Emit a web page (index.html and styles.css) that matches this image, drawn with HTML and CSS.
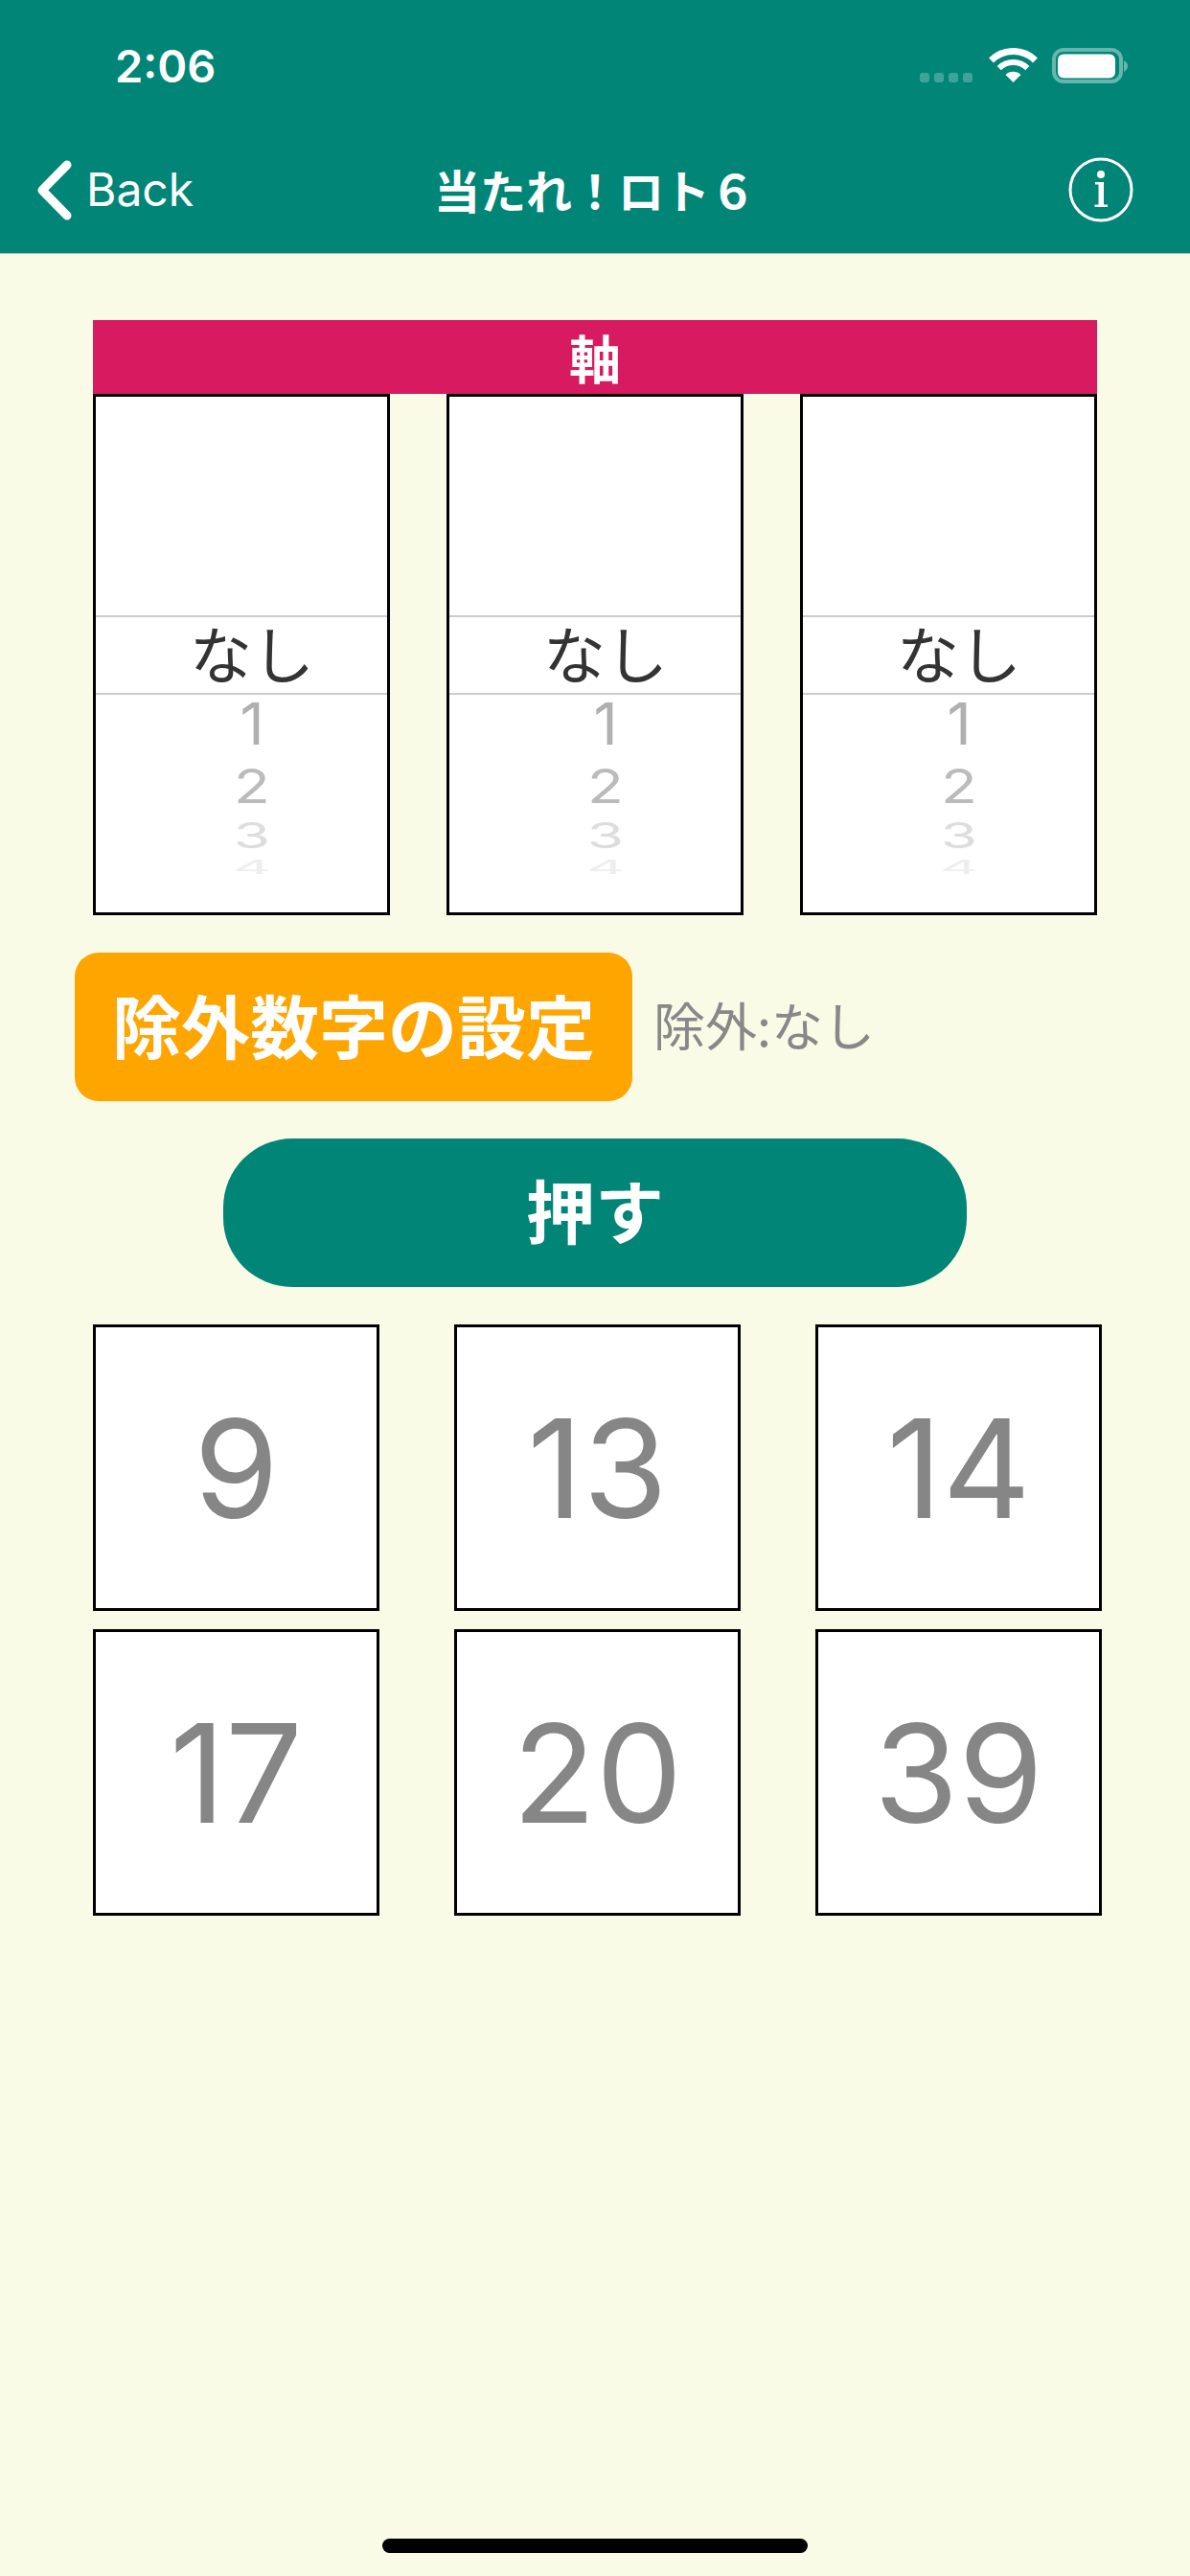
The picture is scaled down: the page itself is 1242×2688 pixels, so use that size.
FILE: index.html
```html
<!DOCTYPE html>
<html lang="ja">
  <head>
    <meta charset="UTF-8" />
    <meta name="viewport" content="width=device-width, initial-scale=1.0" />
    <title>当たれ！ロト６</title>
    <link rel="stylesheet" href="styles.css">
  </head>
  <body>
    <div class="page">
      <header class="header">
        <div class="status">
          <span class="time">2:06</span>
          <svg class="status-icons" width="217" height="37" viewBox="0 0 217 37">
            <g fill="#fff" fill-opacity="0.25">
              <rect x="0" y="26" width="10" height="10" rx="3" />
              <rect x="15" y="26" width="10" height="10" rx="3" />
              <rect x="30" y="26" width="10" height="10" rx="3" />
              <rect x="45" y="26" width="10" height="10" rx="3" />
            </g>
            <g fill="none" stroke="#fff">
              <path d="M74.5 13 A32.5 32.5 0 0 1 120.5 13" stroke-width="7" />
              <path d="M82.7 21.2 A21 21 0 0 1 112.3 21.2" stroke-width="6" />
            </g>
            <path d="M97.5 36 L89.5 28 A11.5 11.5 0 0 1 105.5 28 Z" fill="#fff" />
            <rect x="140" y="2" width="70" height="33" rx="10" fill="none" stroke="#fff" stroke-opacity="0.4" stroke-width="4" />
            <rect x="144" y="6.500" width="60" height="25" rx="6" fill="#fff" />
            <path d="M213 13 C216 15 217 17 217 19 C217 21 216 23 213 25 Z" fill="#fff" fill-opacity="0.4" />
          </svg>
        </div>
        <nav class="nav">
          <div class="nav-left">
            <svg class="chevron" width="37" height="63" viewBox="0 0 37 63">
              <path d="M32 5 L6 31.500 L32 58" fill="none" stroke="#fff" stroke-width="9" stroke-linecap="round" stroke-linejoin="round" />
            </svg>
            <span class="back">Back</span>
          </div>
          <div class="title">当たれ！ロト６</div>
          <div class="nav-right">
            <svg width="68" height="68" viewBox="0 0 68 68">
              <circle cx="34" cy="34" r="32" fill="none" stroke="#fff" stroke-width="3" />
              <circle cx="34" cy="18" r="4" fill="#fff" />
              <path d="M28 26 H37 V49.500 H41 V52 H27.500 V49.500 H31.500 V28.500 H28 Z" fill="#fff" />
            </svg>
          </div>
        </nav>
      </header>

      <main class="main">
        <div class="axis-bar">軸</div>
        <div class="pickers">
          <div class="picker">
            <div class="wheel-blank"></div>
            <div class="wheel-selected"><span>なし</span></div>
            <div class="wheel-rest">
              <div class="wheel-num n1"><span>1</span></div>
              <div class="wheel-num n2"><span>2</span></div>
              <div class="wheel-num n3"><span>3</span></div>
              <div class="wheel-num n4"><span>4</span></div>
            </div>
          </div>
          <div class="picker">
            <div class="wheel-blank"></div>
            <div class="wheel-selected"><span>なし</span></div>
            <div class="wheel-rest">
              <div class="wheel-num n1"><span>1</span></div>
              <div class="wheel-num n2"><span>2</span></div>
              <div class="wheel-num n3"><span>3</span></div>
              <div class="wheel-num n4"><span>4</span></div>
            </div>
          </div>
          <div class="picker">
            <div class="wheel-blank"></div>
            <div class="wheel-selected"><span>なし</span></div>
            <div class="wheel-rest">
              <div class="wheel-num n1"><span>1</span></div>
              <div class="wheel-num n2"><span>2</span></div>
              <div class="wheel-num n3"><span>3</span></div>
              <div class="wheel-num n4"><span>4</span></div>
            </div>
          </div>
        </div>

        <div class="exclude-row">
          <div class="exclude-btn">除外数字の設定</div>
          <div class="exclude-label">除外:なし</div>
        </div>

        <div class="push-btn">押す</div>

        <div class="results">
          <div class="result">9</div>
          <div class="result">13</div>
          <div class="result">14</div>
          <div class="result">17</div>
          <div class="result">20</div>
          <div class="result">39</div>
        </div>
      </main>

      <div class="home-bar"></div>
    </div>
  </body>
</html>
```

FILE: styles.css
```css
* {
  box-sizing: border-box;
}
body {
  margin: 0;
  background-color: #f9fbe7;
  font-family: "Noto Sans CJK JP", sans-serif;
}
.page {
  height: 2688px;
  display: flex;
  flex-direction: column;
  overflow: hidden;
}

/* header */
.header {
  height: 265px;
  background-color: #008577;
  border-bottom: 1px solid #b4bdb0;
  color: #fff;
}
.status {
  height: 132px;
  padding: 4px 65px 0 120px;
  display: flex;
  align-items: center;
  justify-content: space-between;
}
.time {
  font-family: Inter, sans-serif;
  font-size: 47px;
  font-weight: 600;
  line-height: 1;
}
.nav {
  height: 132px;
  padding: 0 38px;
  display: grid;
  grid-template-columns: 1fr auto 1fr;
  align-items: center;
}
.nav-left {
  display: flex;
  align-items: center;
  gap: 15px;
}
.back {
  font-family: Inter, sans-serif;
  font-size: 48px;
  line-height: 1;
}
.title {
  padding-bottom: 3px;
  font-size: 48px;
  font-weight: 700;
  line-height: 1;
}
.nav-right {
  display: flex;
  justify-content: flex-end;
  padding-right: 21px;
}

/* main */
.main {
  padding: 69px 0 0 97px;
}
.axis-bar {
  width: 1048px;
  height: 77px;
  background-color: #d81b60;
  color: #fff;
  font-size: 54px;
  font-weight: 700;
  line-height: 77px;
  text-align: center;
}
.pickers {
  width: 1048px;
  display: flex;
  justify-content: space-between;
}
.picker {
  width: 310px;
  height: 544px;
  background-color: #fff;
  border: 3px solid #000;
}
.wheel-blank {
  height: 228px;
}
.wheel-selected {
  height: 83px;
  border-top: 2px solid #ccc;
  border-bottom: 2px solid #ccc;
  padding-left: 22px;
  color: #333;
  font-size: 65px;
  line-height: 72px;
  text-align: center;
}
.wheel-rest {
  padding-left: 22px;
}
.wheel-num {
  font-family: Inter, sans-serif;
  font-size: 62px;
  line-height: 1;
  display: flex;
  align-items: center;
  justify-content: center;
}
.wheel-num span {
  display: block;
}
.n1 {
  height: 60px;
  color: #b0b0b0;
}
.n1 span {
  transform: scaleY(0.98);
}
.n2 {
  height: 70px;
  color: #bbb;
}
.n2 span {
  transform: scaleY(0.8);
}
.n3 {
  height: 33px;
  color: #ddd;
}
.n3 span {
  transform: scaleY(0.6);
}
.n4 {
  height: 34px;
  color: #eee;
}
.n4 span {
  transform: scaleY(0.32);
}

.exclude-row {
  margin: 39px 0 0 -19px;
  display: flex;
  align-items: center;
  gap: 22px;
}
.exclude-btn {
  width: 582px;
  height: 155px;
  background-color: #ffa500;
  border-radius: 25px;
  color: #fff;
  font-size: 72px;
  font-weight: 700;
  line-height: 147px;
  text-align: center;
}
.exclude-label {
  padding-bottom: 6px;
  color: #888;
  font-size: 54px;
  line-height: 1;
}
.push-btn {
  width: 776px;
  height: 155px;
  margin: 39px 0 0 136px;
  background-color: #008577;
  border-radius: 72px;
  color: #fff;
  font-size: 72px;
  font-weight: 700;
  line-height: 145px;
  text-align: center;
}

.results {
  margin-top: 39px;
  display: grid;
  grid-template-columns: repeat(3, 299px);
  grid-auto-rows: 299px;
  column-gap: 78px;
  row-gap: 19px;
}
.result {
  background-color: #fff;
  border: 3px solid #000;
  color: #868686;
  font-family: Inter, sans-serif;
  font-size: 143px;
  display: flex;
  align-items: center;
  justify-content: center;
}

.home-bar {
  width: 444px;
  height: 15px;
  margin: auto auto 24px;
  background-color: #000;
  border-radius: 8px;
}
```
